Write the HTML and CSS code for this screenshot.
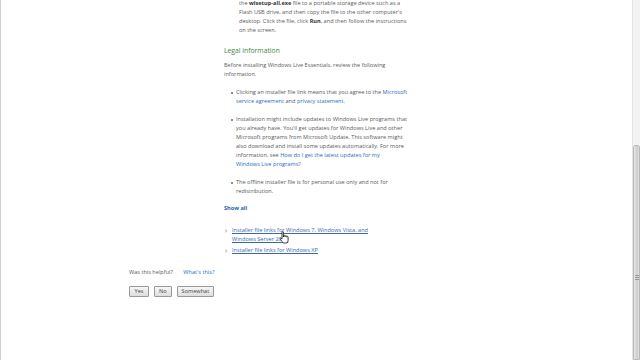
FILE: index.html
```html
<!DOCTYPE html>
<html>
<head>
<meta charset="utf-8">
<link rel="stylesheet" href="styles.css">
</head>
<body>
<div class="frame">
  <div class="main">
    <div class="article">
      <p class="top">the <b>wlsetup-all.exe</b> file to a portable storage device such as a<br>Flash USB drive, and then copy the file to the other computer's<br>desktop. Click the file, click <b>Run</b>, and then follow the instructions<br>on the screen.</p>
      <h2 class="heading">Legal information</h2>
      <p class="intro">Before installing Windows Live Essentials, review the following<br>information.</p>
      <ul class="bullets">
        <li>Clicking an installer file link means that you agree to the <a href="#">Microsoft<br>service agreement</a> and <a href="#">privacy statement</a>.</li>
        <li>Installation might include updates to Windows Live programs that<br>you already have. You'll get updates for Windows Live and other<br>Microsoft programs from Microsoft Update. This software might<br>also download and install some updates automatically. For more<br>information, see <a href="#">How do I get the latest updates for my<br>Windows Live programs?</a></li>
        <li>The offline installer file is for personal use only and not for<br>redistribution.</li>
      </ul>
      <a class="showall" href="#">Show all</a>
      <ul class="links">
        <li><a href="#">Installer file links for Windows 7, Windows Vista, and<br>Windows Server 2008</a>
          <svg class="cursor" width="11" height="13" viewBox="0 0 11 13"><path d="M3 1.2c0-.7 1.4-.7 1.4 0V6l.2-1.3c.2-.6 1.2-.6 1.3.1l.1 1 .3-.8c.3-.5 1.2-.4 1.3.2l.1.9.3-.5c.3-.4 1.1-.2 1.1.4v3c0 1.5-.6 2.3-1.2 3H4.2C3.4 11 2.3 9.6 1.3 8.2.9 7.6 1.5 6.8 2.2 7.3L3 8.1z" fill="#fff" stroke="#111" stroke-width=".8"/></svg>
        </li>
        <li><a href="#">Installer file links for Windows XP</a></li>
      </ul>
    </div>
    <div class="feedback">
      <div class="question">Was this helpful? <a class="whats" href="#">What's this?</a></div>
      <div class="buttons">
        <button class="btn btn-wide">Yes</button>
        <button class="btn">No</button>
        <button class="btn">Somewhat</button>
      </div>
    </div>
  </div>
  <div class="scrollbar">
    <div class="track"></div>
    <div class="thumb"><span class="grip"></span></div>
  </div>
</div>
</body>
</html>
```
FILE: styles.css
```css
* { box-sizing: border-box; }
html, body { margin: 0; padding: 0; background: #fff; }
body { font-family: "Open Sans", "Liberation Sans", sans-serif; font-size: 5.6px; color: #5a5a5a; }
.frame { display: flex; height: 360px; border-left: 1px solid #cfcfcf; overflow: hidden; }
.main { flex: 1; }
a { color: #2a6cc0; text-decoration: none; }
b { color: #333; }
p { margin: 0; }
.article { margin-left: 223px; width: 200px; line-height: 9px; white-space: nowrap; }
.top { margin: -1px 0 0 15px; }
.heading { margin: 10px 0 0; font-size: 6.8px; line-height: 11px; font-weight: normal; color: #3a8a3e; }
.intro { margin-top: 5px; }
.bullets { list-style: none; margin: 9px 0 0; padding: 0 0 0 12px; }
.bullets li { position: relative; margin-bottom: 9px; }
.bullets li::before { content: ""; position: absolute; left: -5px; top: 3.5px; width: 2.2px; height: 2.2px; border-radius: 50%; background: #666; }
.showall { display: block; margin-top: -1px; font-weight: bold; color: #2a5fb0; }
.links { list-style: none; margin: 13px 0 0; padding: 0 0 0 8px; }
.links li { position: relative; margin-bottom: 2px; }
.links li::before { content: "\203A"; position: absolute; left: -7px; top: 0; color: #666; font-size: 7px; }
.links a { text-decoration: underline; color: #3a68b4; }
.cursor { position: absolute; left: 47px; top: 5px; }
.feedback { margin: 13px 0 0 128px; line-height: 9px; }
.whats { margin-left: 9px; }
.buttons { display: flex; gap: 5px; margin-top: 9px; }
.btn { font-family: inherit; font-size: 5.6px; color: #444; height: 11px; padding: 0 4px; line-height: 9px; border: 1px solid #9a9a9a; border-radius: 1px; background: linear-gradient(#f6f6f6, #dedede); }
.btn-wide { min-width: 20px; }
.scrollbar { width: 8px; display: flex; flex-direction: column; border-left: 1px solid #e4e4e4; }
.track { height: 145px; background: #f3f3f3; }
.thumb { flex: 1; position: relative; background: linear-gradient(90deg, #eaeaea, #d4d4d4 40%, #cfcfcf 70%, #e6e6e6); border: 1px solid #b9b9b9; border-radius: 2px 2px 0 0; }
.grip { position: absolute; left: 1px; top: 129px; width: 4px; height: 5px; background: repeating-linear-gradient(#999 0 1px, transparent 1px 2px); }
```
